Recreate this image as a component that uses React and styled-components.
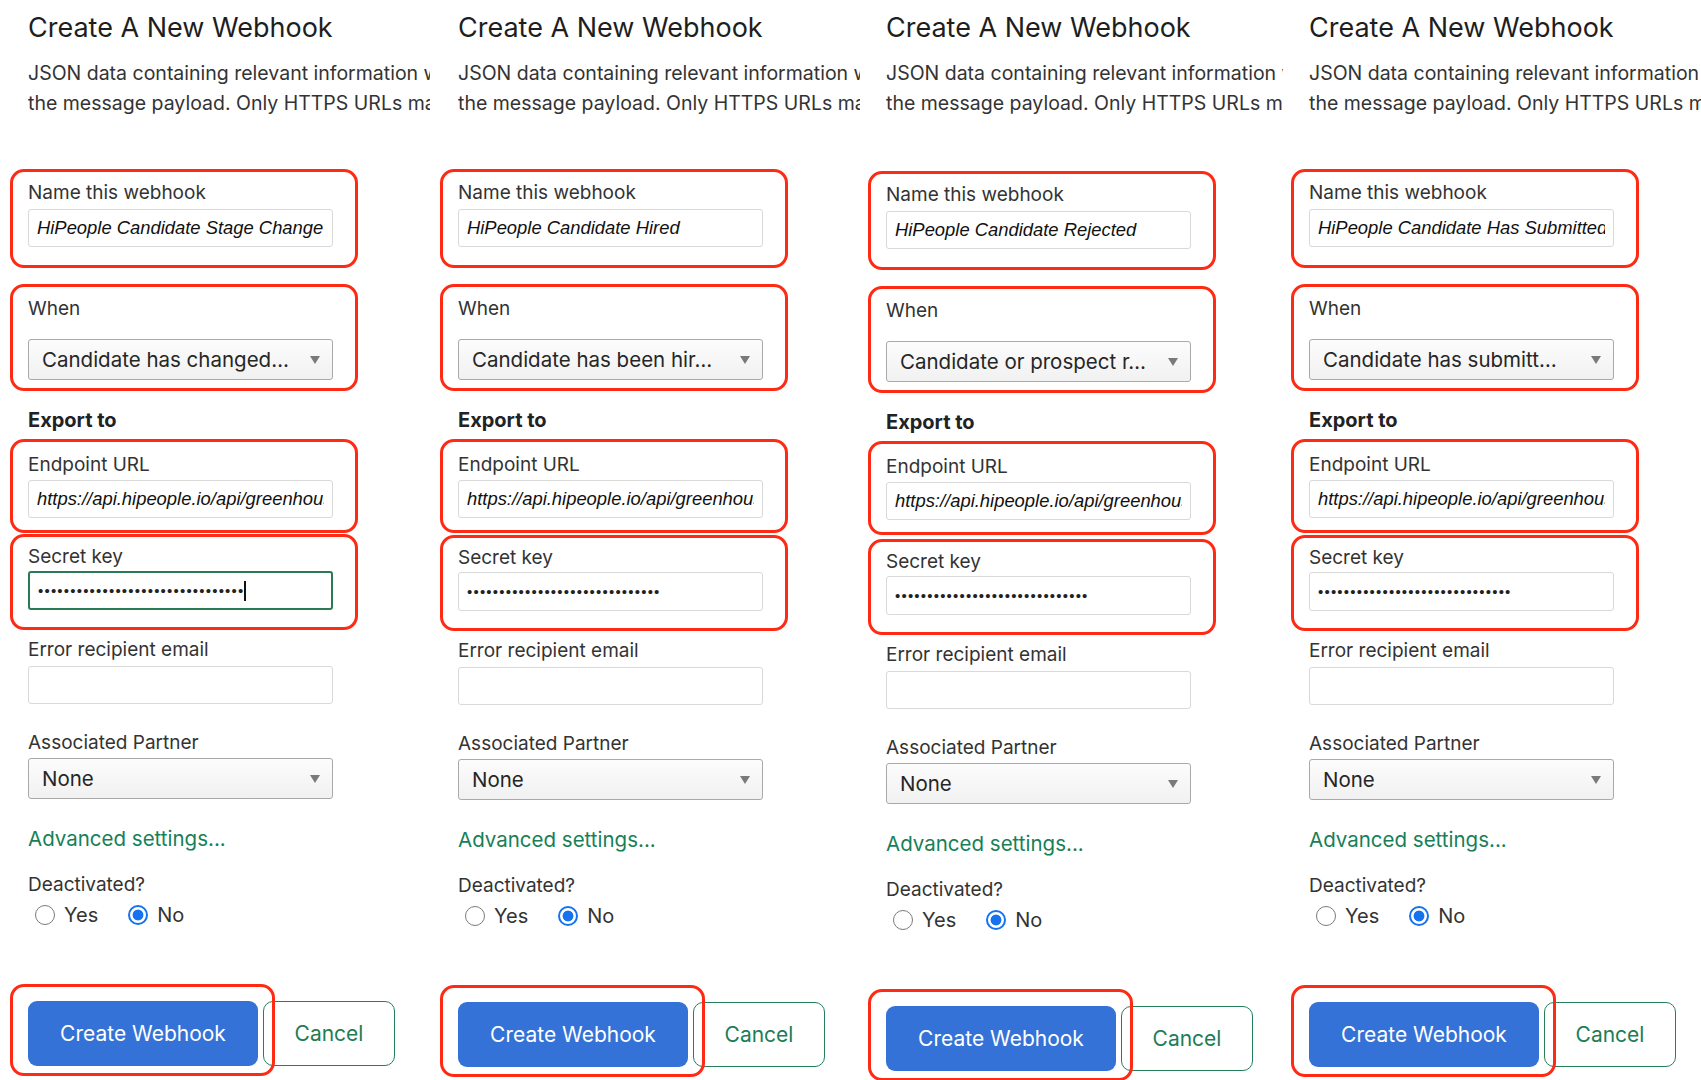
import styled, { createGlobalStyle } from 'styled-components';

const GlobalStyle = createGlobalStyle`
  body {
    margin: 0;
    background: #fff;
    font-family: Inter, "Open Sans", "Liberation Sans", sans-serif;
    color: #2e2e2e;
  }
`;

const Page = styled.div`
  display: grid;
  grid-template-columns: 430px 430px 423px 418px;
  height: 1080px;
  overflow: hidden;
`;

const Panel = styled.section`
  padding: 11px 0 0 ${props => props.$inset}px;
  overflow: hidden;
`;

const Title = styled.h1`
  margin: 0;
  font-size: 27px;
  line-height: 34px;
  font-weight: 400;
  color: #1e1e1e;
  white-space: nowrap;
`;

const Intro = styled.p`
  margin: 13px 0 0;
  font-size: 19.5px;
  line-height: 30px;
  color: #333;
  white-space: nowrap;
`;

const Form = styled.div`
  margin-top: ${props => 51 - props.$shift}px;
  display: flex;
  flex-direction: column;
`;

const Field = styled.div`
  box-sizing: border-box;
  width: 348px;
  margin: ${props => props.$mt || 0}px 0 0 -18px;
  padding: ${props => props.$pt}px 22px ${props => props.$pb}px 15px;
  border: 3px solid ${props => (props.$marked ? '#ff2a14' : 'transparent')};
  border-radius: 14px;
  display: flex;
  flex-direction: column;
  gap: ${props => props.$gap}px;
`;

const Label = styled.div`
  font-size: 19px;
  line-height: 24px;
  color: #333;
`;

const Heading = styled.div`
  margin-top: 17px;
  font-size: 20px;
  line-height: 24px;
  font-weight: 700;
  color: #222;
`;

const TextBox = styled.div`
  box-sizing: border-box;
  width: 305px;
  height: ${props => props.$h || 38}px;
  padding: 0 8px;
  display: flex;
  align-items: center;
  background: #fff;
  border: ${props => (props.$focused ? '2px solid #2a7a58' : '1px solid #d9d9d9')};
  border-radius: 3px;
`;

const Value = styled.span`
  flex: 1;
  overflow: hidden;
  white-space: nowrap;
  font-family: "Liberation Sans", Arial, sans-serif;
  font-style: italic;
  font-size: 18.4px;
  color: #111;
`;

const Dots = styled.span`
  font-family: "Liberation Sans", Arial, sans-serif;
  font-size: 15px;
  letter-spacing: 1.2px;
  color: #222;
`;

const Caret = styled.span`
  display: inline-block;
  width: 1.5px;
  height: 20px;
  background: #111;
`;

const Select = styled.div`
  box-sizing: border-box;
  width: 305px;
  height: 41px;
  padding: 0 12px 0 13px;
  display: flex;
  align-items: center;
  justify-content: space-between;
  background: linear-gradient(#fcfcfc, #f1f1f1);
  border: 1px solid #a9a9a9;
  border-radius: 3px;
  font-size: 20.5px;
  color: #262626;
  white-space: nowrap;
`;

const Arrow = styled.span`
  width: 0;
  height: 0;
  border-left: 5px solid transparent;
  border-right: 5px solid transparent;
  border-top: 8px solid #7a7a7a;
`;

const Link = styled.a`
  margin-top: 20px;
  font-size: 20.5px;
  line-height: 28px;
  color: #168058;
  text-decoration: none;
`;

const Question = styled(Label)`
  margin-top: 20px;
`;

const Choices = styled.div`
  margin-top: 6px;
  display: flex;
  align-items: center;
  height: 24px;
  padding-left: 7px;
`;

const Choice = styled.label`
  display: flex;
  align-items: center;
  gap: 9px;
  margin-right: 30px;
  font-size: 20px;
  color: #333;
`;

const Radio = styled.span`
  box-sizing: border-box;
  width: 20px;
  height: 20px;
  border-radius: 50%;
  border: ${props => (props.$checked ? '2px solid #1672ee' : '1px solid #7b7b7b')};
  background: ${props =>
    props.$checked ? 'radial-gradient(circle, #1672ee 0 5px, #fff 5.8px)' : '#fff'};
`;

const Actions = styled.div`
  margin-top: 74px;
  display: flex;
  gap: 5px;
`;

const Spot = styled.div`
  position: relative;
  &::after {
    content: '';
    position: absolute;
    inset: -17px -17px -10px -18px;
    border: 3px solid #ff2a14;
    border-radius: 14px;
    pointer-events: none;
  }
`;

const Primary = styled.button`
  width: 230px;
  height: 65px;
  border: none;
  border-radius: 9px;
  background: #3572d7;
  color: #fff;
  font-family: inherit;
  font-size: 21px;
`;

const Secondary = styled.button`
  width: 132px;
  height: 65px;
  background: #fff;
  border: 1.5px solid #23805a;
  border-radius: 10px;
  color: #1d7d55;
  font-family: inherit;
  font-size: 21px;
`;

const panels = [
  { name: 'HiPeople Candidate Stage Change', when: 'Candidate has changed…', dots: 32, focused: true, inset: 28, shift: 0, drop: 0 },
  { name: 'HiPeople Candidate Hired', when: 'Candidate has been hir…', dots: 30, inset: 28, shift: 0, drop: 1 },
  { name: 'HiPeople Candidate Rejected', when: 'Candidate or prospect r…', dots: 30, inset: 26, shift: -2, drop: 3 },
  { name: 'HiPeople Candidate Has Submitted Feedback', when: 'Candidate has submitt…', dots: 30, inset: 26, shift: 0, drop: 1 },
];

const url = 'https://api.hipeople.io/api/greenhouse/webhook';

const WebhookForm = ({ data }) => (
  <Panel $inset={data.inset}>
    <Title>Create A New Webhook</Title>
    <Intro>
      JSON data containing relevant information will be included in
      <br />
      the message payload. Only HTTPS URLs may be used.
    </Intro>
    <Form $shift={data.shift}>
      <Field $marked $pt={9} $pb={18} $gap={4}>
        <Label>Name this webhook</Label>
        <TextBox>
          <Value>{data.name}</Value>
        </TextBox>
      </Field>
      <Field $marked $mt={16} $pt={10} $pb={8} $gap={18}>
        <Label>When</Label>
        <Select>
          {data.when}
          <Arrow />
        </Select>
      </Field>
      <Heading>Export to</Heading>
      <Field $marked $mt={7} $pt={11} $pb={12} $gap={3}>
        <Label>Endpoint URL</Label>
        <TextBox>
          <Value>{url}</Value>
        </TextBox>
      </Field>
      <Field $marked $mt={1 + data.drop} $pt={8} $pb={17} $gap={2}>
        <Label>Secret key</Label>
        <TextBox $h={39} $focused={data.focused}>
          <Dots>{'•'.repeat(data.dots)}</Dots>
          {data.focused && <Caret />}
        </TextBox>
      </Field>
      <Field $pt={5} $pb={3} $gap={4}>
        <Label>Error recipient email</Label>
        <TextBox />
      </Field>
      <Field $pt={18} $pb={3} $gap={3}>
        <Label>Associated Partner</Label>
        <Select>
          None
          <Arrow />
        </Select>
      </Field>
      <Link href="#">Advanced settings...</Link>
      <Question>Deactivated?</Question>
      <Choices>
        <Choice>
          <Radio />
          Yes
        </Choice>
        <Choice>
          <Radio $checked />
          No
        </Choice>
      </Choices>
      <Actions>
        <Spot>
          <Primary>Create Webhook</Primary>
        </Spot>
        <Secondary>Cancel</Secondary>
      </Actions>
    </Form>
  </Panel>
);

const App = () => (
  <>
    <GlobalStyle />
    <Page>
      {panels.map(p => (
        <WebhookForm key={p.name} data={p} />
      ))}
    </Page>
  </>
);

export default App;
